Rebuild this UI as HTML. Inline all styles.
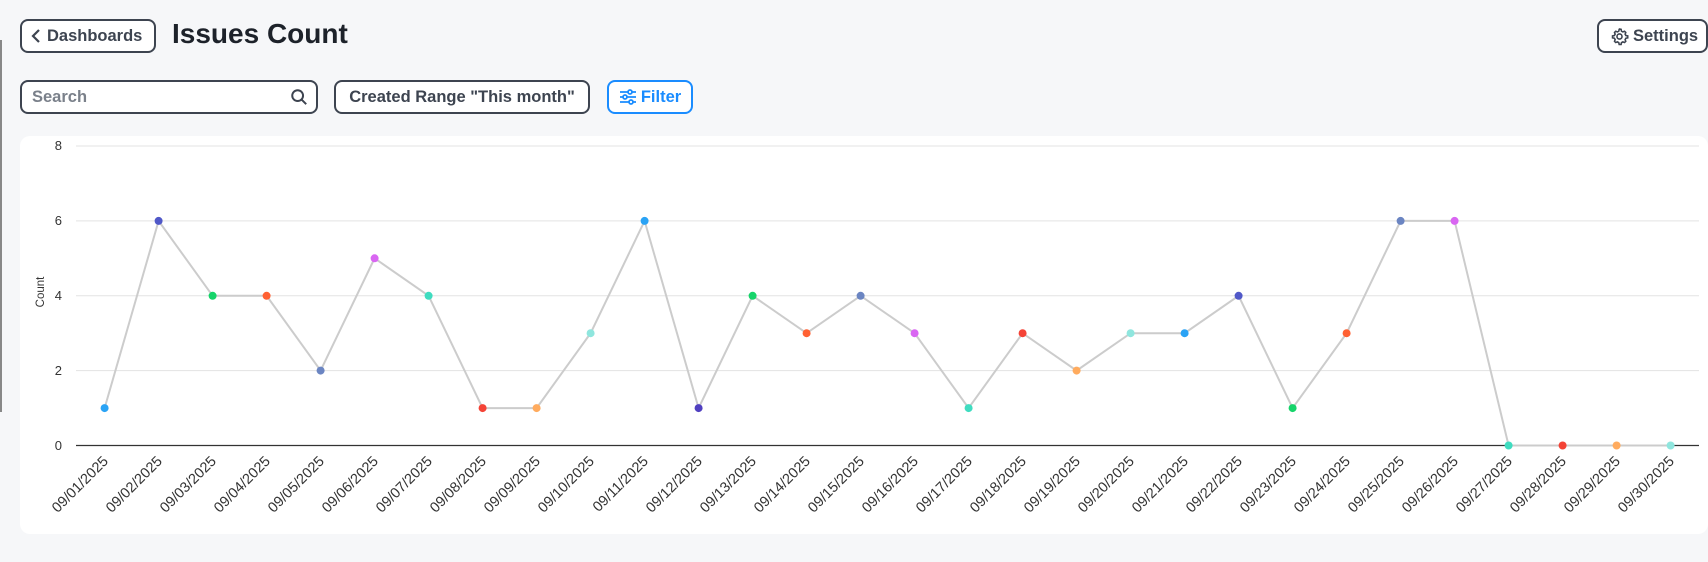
<!DOCTYPE html>
<html><head><meta charset="utf-8"><style>
*{box-sizing:border-box;margin:0;padding:0}
body{width:1708px;height:562px;background:#f6f7f9;font-family:"Liberation Sans",sans-serif;position:relative;overflow:hidden;color:#222}
.btn{position:absolute;border:2px solid #3d4450;border-radius:8px;background:#fff;font-weight:bold;font-size:16.5px;color:#3d4450;display:flex;align-items:center}
.card{position:absolute;left:20px;top:136px;width:1688px;height:398px;background:#fff;border-radius:10px}
</style></head><body>
<div style="position:absolute;left:0;top:40px;width:2px;height:372px;background:#888"></div>
<div class="btn" style="left:20px;top:19px;width:136px;height:34px;padding-left:8px">
<svg width="14" height="16" viewBox="0 0 14 16"><path d="M9 2 L3 8 L9 14" fill="none" stroke="#3d4450" stroke-width="2.2"/></svg><span style="margin-left:3px">Dashboards</span></div>
<div style="position:absolute;left:172px;top:18px;font-size:28px;font-weight:bold;color:#1d222a">Issues Count</div>
<div class="btn" style="left:1597px;top:19px;width:111px;height:34px;padding-left:11px">
<svg width="19" height="19" viewBox="0 0 24 24" fill="none" stroke="#3d4450" stroke-width="2"><path d="M12 2.5l2 .4.5 2.3 1.7 1 2.2-.8 1.5 1.5-.8 2.2 1 1.7 2.3.5v2.4l-2.3.5-1 1.7.8 2.2-1.5 1.5-2.2-.8-1.7 1-.5 2.3h-2.4l-.5-2.3-1.7-1-2.2.8-1.5-1.5.8-2.2-1-1.7-2.3-.5v-2.4l2.3-.5 1-1.7-.8-2.2 1.5-1.5 2.2.8 1.7-1 .5-2.3z"/><circle cx="12" cy="12" r="3.2"/></svg><span style="margin-left:4px">Settings</span></div>
<div class="btn" style="left:20px;top:80px;width:298px;height:34px;padding-left:10px;color:#7a808a;justify-content:space-between;padding-right:8px">Search
<svg width="18" height="18" viewBox="0 0 20 20" fill="none" stroke="#3d4450" stroke-width="2.2"><circle cx="8.5" cy="8.5" r="6"/><path d="M13 13l5 5"/></svg></div>
<div class="btn" style="left:334px;top:80px;width:256px;height:34px;justify-content:center">Created Range "This month"</div>
<div class="btn" style="left:607px;top:80px;width:86px;height:34px;justify-content:center;border-color:#1a8cff;color:#1a8cff">
<svg width="18" height="16" viewBox="0 0 18 16" fill="none" stroke="#1a8cff" stroke-width="1.8"><path d="M1 3h16M1 8h16M1 13h16"/><circle cx="11" cy="3" r="2" fill="#fff"/><circle cx="6" cy="8" r="2" fill="#fff"/><circle cx="12" cy="13" r="2" fill="#fff"/></svg><span style="margin-left:4px">Filter</span></div>
<div class="card"></div>
<svg style="position:absolute;left:0;top:0" width="1708" height="562" font-family="Liberation Sans, sans-serif" font-size="13" fill="#333">
<g stroke="#e3e3e3" stroke-width="1">
<line x1="76" y1="146" x2="1699" y2="146"/><line x1="76" y1="220.9" x2="1699" y2="220.9"/><line x1="76" y1="295.8" x2="1699" y2="295.8"/><line x1="76" y1="370.6" x2="1699" y2="370.6"/></g>
<line x1="76" y1="445.5" x2="1699" y2="445.5" stroke="#333" stroke-width="1.3"/>
<g text-anchor="end"><text x="62" y="150">8</text><text x="62" y="225">6</text><text x="62" y="300">4</text><text x="62" y="375">2</text><text x="62" y="450">0</text></g>
<text transform="translate(44,292) rotate(-90)" text-anchor="middle" font-size="11.5">Count</text>
<polyline fill="none" stroke="#ccc" stroke-width="2" points="104.6,408.1 158.6,220.9 212.6,295.8 266.6,295.8 320.6,370.6 374.6,258.3 428.6,295.8 482.6,408.1 536.6,408.1 590.6,333.2 644.6,220.9 698.6,408.1 752.6,295.8 806.6,333.2 860.6,295.8 914.6,333.2 968.6,408.1 1022.6,333.2 1076.6,370.6 1130.6,333.2 1184.6,333.2 1238.6,295.8 1292.6,408.1 1346.6,333.2 1400.6,220.9 1454.6,220.9 1508.6,445.5 1562.6,445.5 1616.6,445.5 1670.6,445.5"/>
<g>
<circle cx="104.6" cy="408.1" r="4" fill="#2aa3f5"/><circle cx="158.6" cy="220.9" r="4" fill="#5058c8"/><circle cx="212.6" cy="295.8" r="4" fill="#16d46a"/><circle cx="266.6" cy="295.8" r="4" fill="#ff6133"/><circle cx="320.6" cy="370.6" r="4" fill="#6b85c2"/><circle cx="374.6" cy="258.3" r="4" fill="#d966f2"/><circle cx="428.6" cy="295.8" r="4" fill="#3fdcc0"/><circle cx="482.6" cy="408.1" r="4" fill="#f44336"/><circle cx="536.6" cy="408.1" r="4" fill="#ffab5e"/><circle cx="590.6" cy="333.2" r="4" fill="#8fe6de"/>
<circle cx="644.6" cy="220.9" r="4" fill="#2aa3f5"/><circle cx="698.6" cy="408.1" r="4" fill="#5040c0"/><circle cx="752.6" cy="295.8" r="4" fill="#16d46a"/><circle cx="806.6" cy="333.2" r="4" fill="#ff6133"/><circle cx="860.6" cy="295.8" r="4" fill="#6b85c2"/><circle cx="914.6" cy="333.2" r="4" fill="#d966f2"/><circle cx="968.6" cy="408.1" r="4" fill="#3fdcc0"/><circle cx="1022.6" cy="333.2" r="4" fill="#f44336"/><circle cx="1076.6" cy="370.6" r="4" fill="#ffab5e"/><circle cx="1130.6" cy="333.2" r="4" fill="#8fe6de"/>
<circle cx="1184.6" cy="333.2" r="4" fill="#2aa3f5"/><circle cx="1238.6" cy="295.8" r="4" fill="#5058c8"/><circle cx="1292.6" cy="408.1" r="4" fill="#16d46a"/><circle cx="1346.6" cy="333.2" r="4" fill="#ff6133"/><circle cx="1400.6" cy="220.9" r="4" fill="#6b85c2"/><circle cx="1454.6" cy="220.9" r="4" fill="#d966f2"/><circle cx="1508.6" cy="445.5" r="4" fill="#3fdcc0"/><circle cx="1562.6" cy="445.5" r="4" fill="#f44336"/><circle cx="1616.6" cy="445.5" r="4" fill="#ffab5e"/><circle cx="1670.6" cy="445.5" r="4" fill="#8fe6de"/>
</g>
<g text-anchor="end" font-size="14.5">
<text transform="translate(109,462) rotate(-45)">09/01/2025</text><text transform="translate(163,462) rotate(-45)">09/02/2025</text><text transform="translate(217,462) rotate(-45)">09/03/2025</text><text transform="translate(271,462) rotate(-45)">09/04/2025</text><text transform="translate(325,462) rotate(-45)">09/05/2025</text><text transform="translate(379,462) rotate(-45)">09/06/2025</text><text transform="translate(433,462) rotate(-45)">09/07/2025</text><text transform="translate(487,462) rotate(-45)">09/08/2025</text><text transform="translate(541,462) rotate(-45)">09/09/2025</text><text transform="translate(595,462) rotate(-45)">09/10/2025</text>
<text transform="translate(649,462) rotate(-45)">09/11/2025</text><text transform="translate(703,462) rotate(-45)">09/12/2025</text><text transform="translate(757,462) rotate(-45)">09/13/2025</text><text transform="translate(811,462) rotate(-45)">09/14/2025</text><text transform="translate(865,462) rotate(-45)">09/15/2025</text><text transform="translate(919,462) rotate(-45)">09/16/2025</text><text transform="translate(973,462) rotate(-45)">09/17/2025</text><text transform="translate(1027,462) rotate(-45)">09/18/2025</text><text transform="translate(1081,462) rotate(-45)">09/19/2025</text><text transform="translate(1135,462) rotate(-45)">09/20/2025</text>
<text transform="translate(1189,462) rotate(-45)">09/21/2025</text><text transform="translate(1243,462) rotate(-45)">09/22/2025</text><text transform="translate(1297,462) rotate(-45)">09/23/2025</text><text transform="translate(1351,462) rotate(-45)">09/24/2025</text><text transform="translate(1405,462) rotate(-45)">09/25/2025</text><text transform="translate(1459,462) rotate(-45)">09/26/2025</text><text transform="translate(1513,462) rotate(-45)">09/27/2025</text><text transform="translate(1567,462) rotate(-45)">09/28/2025</text><text transform="translate(1621,462) rotate(-45)">09/29/2025</text><text transform="translate(1675,462) rotate(-45)">09/30/2025</text>
</g>
</svg>
</body></html>
